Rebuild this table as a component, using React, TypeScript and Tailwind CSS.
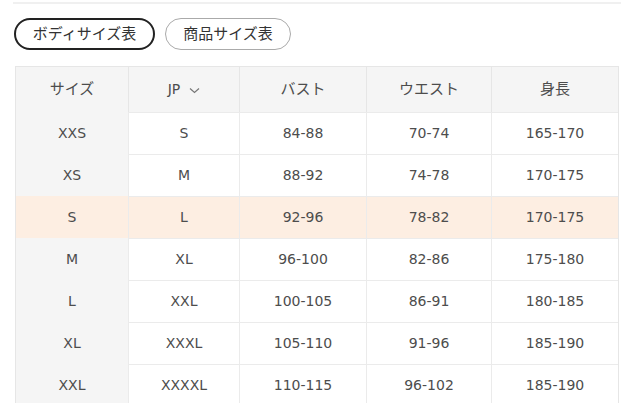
const rows = [
  ['XXS', 'S', '84-88', '70-74', '165-170'],
  ['XS', 'M', '88-92', '74-78', '170-175'],
  ['S', 'L', '92-96', '78-82', '170-175'],
  ['M', 'XL', '96-100', '82-86', '175-180'],
  ['L', 'XXL', '100-105', '86-91', '180-185'],
  ['XL', 'XXXL', '105-110', '91-96', '185-190'],
  ['XXL', 'XXXXL', '110-115', '96-102', '185-190'],
];

const widths = ['w-[112px]', 'w-[111px]', 'w-[127px]', 'w-[125px]', 'w-[127px]'];

export default function App() {
  return (
    <div className="w-[640px] h-[403px] overflow-hidden bg-white text-[#4d4d4d] font-['DejaVu_Sans','Noto_Sans_CJK_JP',sans-serif]">
      <div className="ml-[13px] mt-[2px] w-[608px] h-[2px] bg-[#f0f0f0]" />

      {/* tabs */}
      <div className="flex gap-[10px] pl-[14px] mt-[14px]">
        <button className="h-[32px] w-[141px] rounded-full border-2 border-[#222] text-[15px] text-[#333]">
          ボディサイズ表
        </button>
        <button className="h-[32px] w-[126px] rounded-full border border-[#aaa] text-[15px] text-[#333]">
          商品サイズ表
        </button>
      </div>

      {/* size table */}
      <div className="ml-[15px] mt-[16px] w-[604px] border-t border-x border-[#e6e6e6] text-[14px]">
        <div className="flex h-[45px] bg-[#f5f5f5] text-[15px]">
          <div className={`${widths[0]} flex items-center justify-center`}>サイズ</div>
          <div className={`${widths[1]} flex items-center justify-center gap-[9px] border-l border-[#e6e6e6] text-[14px]`}>
            JP
            <svg width="11" height="7" viewBox="0 0 11 7" fill="none" className="mt-[2px]">
              <path d="M1 1.5 L5.5 5.5 L10 1.5" stroke="#777" strokeWidth="1.2" />
            </svg>
          </div>
          <div className={`${widths[2]} flex items-center justify-center border-l border-[#e6e6e6]`}>バスト</div>
          <div className={`${widths[3]} flex items-center justify-center border-l border-[#e6e6e6]`}>ウエスト</div>
          <div className={`${widths[4]} flex items-center justify-center border-l border-[#e6e6e6]`}>身長</div>
        </div>
        {rows.map((r) => {
          const hl = r[0] === 'S';
          return (
            <div key={r[0]} className={`flex h-[42px] ${hl ? 'bg-[#fdeee2]' : ''}`}>
              <div className={`${widths[0]} flex items-center justify-center ${hl ? 'bg-[#fdeee2]' : 'bg-[#f5f5f5]'}`}>
                {r[0]}
              </div>
              {r.slice(1).map((c, i) => (
                <div
                  key={i}
                  className={`${widths[i + 1]} flex items-center justify-center border-l border-t border-[#ebebeb]`}
                >
                  {c}
                </div>
              ))}
            </div>
          );
        })}
      </div>
    </div>
  );
}
